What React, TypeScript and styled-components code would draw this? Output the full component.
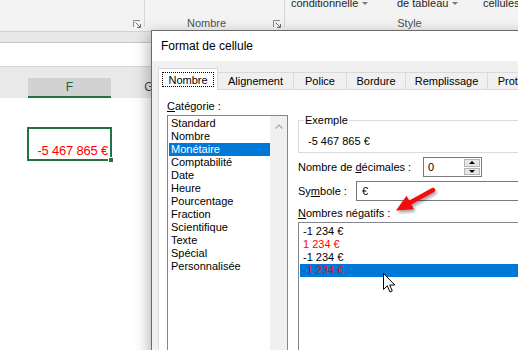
import styled, { createGlobalStyle } from "styled-components";

const GlobalStyle = createGlobalStyle`
  body {
    margin: 0;
    background: #fff;
    font-family: "Liberation Sans", Arial, sans-serif;
  }
  * {
    box-sizing: border-box;
  }
`;

const categories = [
  "Standard",
  "Nombre",
  "Monétaire",
  "Comptabilité",
  "Date",
  "Heure",
  "Pourcentage",
  "Fraction",
  "Scientifique",
  "Texte",
  "Spécial",
  "Personnalisée",
];

const negatives = [
  { text: "-1 234 €", red: false, selected: false },
  { text: "1 234 €", red: true, selected: false },
  { text: "-1 234 €", red: false, selected: false },
  { text: "-1 234 €", red: true, selected: true },
];

const tabs = [
  { label: "Nombre", width: 60 },
  { label: "Alignement", width: 76 },
  { label: "Police", width: 53 },
  { label: "Bordure", width: 59 },
  { label: "Remplissage", width: 82 },
  { label: "Protection", width: 70 },
];

export default function App() {
  return (
    <>
      <GlobalStyle />
      <Screen>
        <Ribbon>
          <RibbonGroup $width={144}>
            <GroupTop />
            <GroupFooter>
              <GroupLabel />
              <Launcher />
            </GroupFooter>
          </RibbonGroup>
          <Separator />
          <RibbonGroup $width={139}>
            <GroupTop />
            <GroupFooter>
              <GroupLabel>Nombre</GroupLabel>
              <Launcher />
            </GroupFooter>
          </RibbonGroup>
          <Separator />
          <RibbonGroup $width={265}>
            <GroupTop>
              <TopItem $width={106}>
                conditionnelle <Caret />
              </TopItem>
              <TopItem $width={86}>
                de tableau <Caret />
              </TopItem>
              <TopItem $width={60}>cellules</TopItem>
            </GroupTop>
            <GroupFooter>
              <GroupLabel>Style</GroupLabel>
              <Launcher />
            </GroupFooter>
          </RibbonGroup>
        </Ribbon>
        <FormulaBand />
        <FormulaBar />
        <HeaderBand>
          <ColHeader $width={28} />
          <ColHeader $width={83} $selected>
            F
          </ColHeader>
          <ColHeader $width={76}>G</ColHeader>
        </HeaderBand>
        <Sheet>
          <SelectedCell>
            -5 467 865 €
            <FillHandle />
          </SelectedCell>
        </Sheet>

        <Dialog>
          <TitleBar>Format de cellule</TitleBar>
          <DialogBody>
            <TabStrip>
              {tabs.map((t, i) => (
                <Tab key={t.label} $width={t.width} $active={i === 0}>
                  {i === 0 ? <FocusRing>{t.label}</FocusRing> : t.label}
                </Tab>
              ))}
            </TabStrip>
            <TabPanel>
              <LeftCol>
                <FieldLabel>
                  <u>C</u>atégorie :
                </FieldLabel>
                <ListBox $mt={2}>
                  <ListItems $padLeft={1} $padTop={1}>
                    {categories.map((c) => (
                      <ListItem key={c} $selected={c === "Monétaire"} $indent={2}>
                        {c}
                      </ListItem>
                    ))}
                  </ListItems>
                  <ScrollTrack>
                    <svg width="8" height="5" viewBox="0 0 8 5">
                      <polyline
                        points="0.5,4.5 4,1 7.5,4.5"
                        fill="none"
                        stroke="#a6a6a6"
                        strokeWidth="1.2"
                      />
                    </svg>
                  </ScrollTrack>
                </ListBox>
              </LeftCol>
              <RightCol>
                <SampleBox>
                  <SampleLegend>Exemple</SampleLegend>
                  <SampleValue>-5 467 865 €</SampleValue>
                </SampleBox>
                <FormRow $mt={4}>
                  <RowLabel $width={125}>
                    Nombre de <u>d</u>écimales :
                  </RowLabel>
                  <SpinBox>
                    <SpinValue>0</SpinValue>
                    <SpinButtons>
                      <SpinHalf>
                        <Triangle $up />
                      </SpinHalf>
                      <SpinHalf>
                        <Triangle />
                      </SpinHalf>
                    </SpinButtons>
                  </SpinBox>
                </FormRow>
                <FormRow $mt={4}>
                  <RowLabel $width={58}>
                    Sy<u>m</u>bole :
                  </RowLabel>
                  <ComboBox>€</ComboBox>
                </FormRow>
                <FieldLabel $mt={6}>
                  <u>N</u>ombres négatifs :
                </FieldLabel>
                <ListBox $mt={2}>
                  <ListItems $padLeft={1} $padTop={2}>
                    {negatives.map((n, i) => (
                      <ListItem
                        key={i}
                        $selected={n.selected}
                        $red={n.red}
                        $indent={3}
                      >
                        {n.text}
                      </ListItem>
                    ))}
                  </ListItems>
                </ListBox>
              </RightCol>
            </TabPanel>
          </DialogBody>
        </Dialog>

        <ArrowMark width="60" height="40" viewBox="0 0 60 40">
          <defs>
            <filter id="arrowShadow" x="-20%" y="-20%" width="140%" height="140%">
              <feGaussianBlur stdDeviation="1.4" />
            </filter>
          </defs>
          <g transform="translate(1.5 2.5)" opacity="0.35" filter="url(#arrowShadow)">
            <line x1="48" y1="10" x2="24" y2="23.3" stroke="#000" strokeWidth="4.5" strokeLinecap="round" />
            <polygon points="11,30.5 29,29.3 21.5,15.8" fill="#000" />
          </g>
          <line x1="48" y1="10" x2="24" y2="23.3" stroke="#f40c0c" strokeWidth="4.5" strokeLinecap="round" />
          <polygon points="11,30.5 29,29.3 21.5,15.8" fill="#f40c0c" />
        </ArrowMark>

        <Pointer width="13" height="20" viewBox="0 0 13 20">
          <path
            d="M0.5 0.5 L0.5 16.5 L4.3 12.8 L7 19 L9.3 18 L6.7 12 L11.8 12 Z"
            fill="#fff"
            stroke="#000"
            strokeWidth="1"
            strokeLinejoin="miter"
          />
        </Pointer>
      </Screen>
    </>
  );
}

function Launcher() {
  return (
    <LauncherIcon width="8" height="8" viewBox="0 0 8 8">
      <polyline points="0.5,7 0.5,0.5 7,0.5" fill="none" stroke="#8a8a8a" strokeWidth="1" />
      <line x1="2.5" y1="2.5" x2="7" y2="7" stroke="#6d6d6d" strokeWidth="1" />
      <polyline points="4,7.5 7.5,7.5 7.5,4" fill="none" stroke="#6d6d6d" strokeWidth="1" />
    </LauncherIcon>
  );
}

const Screen = styled.div`
  position: relative;
  width: 518px;
  height: 350px;
  overflow: hidden;
  background: #fff;
  font-family: "Liberation Sans", Arial, sans-serif;
  font-size: 11px;
  color: #000;
`;

const Ribbon = styled.div`
  display: flex;
  height: 32px;
  background: #f3f3f3;
  border-bottom: 1px solid #d2d2d2;
  overflow: hidden;
`;

const RibbonGroup = styled.div<{ $width: number }>`
  display: flex;
  flex-direction: column;
  justify-content: space-between;
  flex: 0 0 ${(p) => p.$width}px;
  height: 31px;
  padding-bottom: 1px;
`;

const Separator = styled.div`
  flex: 0 0 1px;
  height: 27px;
  background: #d6d6d6;
`;

const GroupTop = styled.div`
  display: flex;
  flex-shrink: 0;
  height: 13px;
  margin-top: -3px;
  padding-left: 6px;
  line-height: 13px;
  color: #262626;
  white-space: nowrap;
`;

const TopItem = styled.span<{ $width: number }>`
  display: flex;
  align-items: center;
  gap: 4px;
  flex: 0 0 ${(p) => p.$width}px;
`;

const Caret = styled.span`
  width: 0;
  height: 0;
  border-left: 3px solid transparent;
  border-right: 3px solid transparent;
  border-top: 3px solid #7a7a7a;
`;

const GroupFooter = styled.div`
  display: flex;
  align-items: center;
  flex-shrink: 0;
  height: 13px;
`;

const GroupLabel = styled.span`
  flex: 1;
  text-align: center;
  line-height: 13px;
  color: #505050;
`;

const LauncherIcon = styled.svg`
  flex: 0 0 8px;
  margin: 0 3px 0 5px;
`;

const FormulaBand = styled.div`
  height: 11px;
  background: #e8e8e8;
  border-bottom: 1px solid #c6c6c6;
`;

const FormulaBar = styled.div`
  height: 24px;
  background: #fff;
  border-bottom: 1px solid #d4d4d4;
`;

const HeaderBand = styled.div`
  display: flex;
  align-items: flex-end;
  height: 31px;
  background: #e9e9e9;
`;

const ColHeader = styled.div<{ $width: number; $selected?: boolean }>`
  display: flex;
  align-items: center;
  justify-content: center;
  flex: 0 0 ${(p) => p.$width}px;
  height: 20px;
  font-size: 12px;
  color: ${(p) => (p.$selected ? "#215c3a" : "#444")};
  background: ${(p) => (p.$selected ? "#d2d2d2" : "transparent")};
  border-bottom: 2px solid ${(p) => (p.$selected ? "#217346" : "transparent")};
`;

const Sheet = styled.div`
  padding: 29px 0 0 27px;
`;

const SelectedCell = styled.div`
  position: relative;
  display: flex;
  align-items: flex-end;
  justify-content: flex-end;
  width: 85px;
  height: 34px;
  padding: 0 2px 1px 0;
  border: 2px solid #217346;
  font-size: 13px;
  letter-spacing: -0.2px;
  line-height: 15px;
  color: #ff0000;
`;

const FillHandle = styled.span`
  position: absolute;
  right: -4px;
  bottom: -4px;
  width: 6px;
  height: 6px;
  background: #217346;
  border: 1px solid #fff;
`;

const Dialog = styled.div`
  position: absolute;
  left: 151px;
  top: 30px;
  width: 440px;
  height: 360px;
  display: flex;
  flex-direction: column;
  background: #f0f0f0;
  border: 1px solid #6a6a6a;
  box-shadow: -2px 4px 14px rgba(0, 0, 0, 0.3);
`;

const TitleBar = styled.div`
  display: flex;
  align-items: center;
  flex-shrink: 0;
  height: 30px;
  padding-left: 9px;
  background: #fff;
  font-size: 12px;
`;

const DialogBody = styled.div`
  display: flex;
  flex-direction: column;
  flex: 1 0 auto;
  padding: 7px 0 0 6px;
`;

const TabStrip = styled.div`
  display: flex;
  align-items: flex-end;
  flex-shrink: 0;
  height: 21px;
  position: relative;
  z-index: 1;
`;

const Tab = styled.div<{ $width: number; $active?: boolean }>`
  display: flex;
  align-items: center;
  justify-content: center;
  flex: 0 0 ${(p) => p.$width}px;
  height: ${(p) => (p.$active ? 22 : 17)}px;
  margin-bottom: ${(p) => (p.$active ? -1 : 0)}px;
  padding-top: ${(p) => (p.$active ? 3 : 0)}px;
  background: ${(p) => (p.$active ? "#fff" : "#f0f0f0")};
  border: 1px solid #d9d9d9;
  border-bottom: none;
  border-left: ${(p) => (p.$active ? "1px solid #d9d9d9" : "none")};
  white-space: nowrap;
  overflow: hidden;
`;

const FocusRing = styled.span`
  display: flex;
  align-items: center;
  height: 15px;
  padding: 0 5px;
  border: 1px dotted #000;
  margin-bottom: 3px;
`;

const TabPanel = styled.div`
  display: flex;
  gap: 10px;
  flex: 1 0 auto;
  padding: 10px 0 0 8px;
  background: #fff;
  border: 1px solid #d9d9d9;
`;

const LeftCol = styled.div`
  display: flex;
  flex-direction: column;
  flex: 0 0 121px;
`;

const RightCol = styled.div`
  display: flex;
  flex-direction: column;
  flex: 1;
`;

const FieldLabel = styled.div<{ $mt?: number }>`
  flex-shrink: 0;
  margin-top: ${(p) => p.$mt ?? 0}px;
  line-height: 13px;
  height: 13px;
`;

const ListBox = styled.div<{ $mt: number }>`
  display: flex;
  flex-shrink: 0;
  margin-top: ${(p) => p.$mt}px;
  height: 260px;
  background: #fff;
  border: 1px solid #828790;
`;

const ListItems = styled.div<{ $padLeft: number; $padTop: number }>`
  flex: 1;
  padding: ${(p) => p.$padTop}px 0 0 ${(p) => p.$padLeft}px;
`;

const ListItem = styled.div<{ $selected?: boolean; $red?: boolean; $indent: number }>`
  height: 13px;
  line-height: 13px;
  padding-left: ${(p) => p.$indent}px;
  white-space: nowrap;
  background: ${(p) => (p.$selected ? "#0078d7" : "transparent")};
  color: ${(p) => (p.$red ? "#ff0000" : p.$selected ? "#fff" : "#000")};
`;

const ScrollTrack = styled.div`
  display: flex;
  justify-content: center;
  flex: 0 0 17px;
  padding-top: 8px;
  background: #f0f0f0;
`;

const SampleBox = styled.fieldset`
  flex-shrink: 0;
  margin: 14px 0 0;
  padding: 0;
  min-width: 0;
  border: 1px solid #dcdcdc;
`;

const SampleLegend = styled.legend`
  margin-left: 5px;
  padding: 0 1px;
  line-height: 13px;
`;

const SampleValue = styled.div`
  padding: 8px 9px 4px;
  line-height: 13px;
`;

const FormRow = styled.div<{ $mt: number }>`
  display: flex;
  align-items: center;
  flex-shrink: 0;
  height: 20px;
  margin-top: ${(p) => p.$mt}px;
`;

const RowLabel = styled.span<{ $width: number }>`
  flex: 0 0 ${(p) => p.$width}px;
  white-space: nowrap;
`;

const SpinBox = styled.div`
  display: flex;
  align-items: stretch;
  width: 59px;
  height: 20px;
  border: 1px solid #7a7a7a;
  background: #fff;
`;

const SpinValue = styled.span`
  flex: 1;
  display: flex;
  align-items: center;
  padding-left: 4px;
`;

const SpinButtons = styled.div`
  display: flex;
  flex-direction: column;
  gap: 1px;
  flex: 0 0 16px;
  margin: 1px 1px 1px 0;
`;

const SpinHalf = styled.div`
  display: flex;
  align-items: center;
  justify-content: center;
  flex: 1;
  background: #e6e6e6;
  border: 1px solid #b4b4b4;
`;

const Triangle = styled.span<{ $up?: boolean }>`
  width: 0;
  height: 0;
  border-left: 3px solid transparent;
  border-right: 3px solid transparent;
  ${(p) => (p.$up ? "border-bottom: 3px solid #000;" : "border-top: 3px solid #000;")}
`;

const ComboBox = styled.div`
  flex: 1;
  display: flex;
  align-items: center;
  height: 20px;
  padding-left: 5px;
  border: 1px solid #7a7a7a;
  background: #fff;
`;

const ArrowMark = styled.svg`
  position: absolute;
  left: 385px;
  top: 180px;
`;

const Pointer = styled.svg`
  position: absolute;
  left: 383px;
  top: 273px;
`;
